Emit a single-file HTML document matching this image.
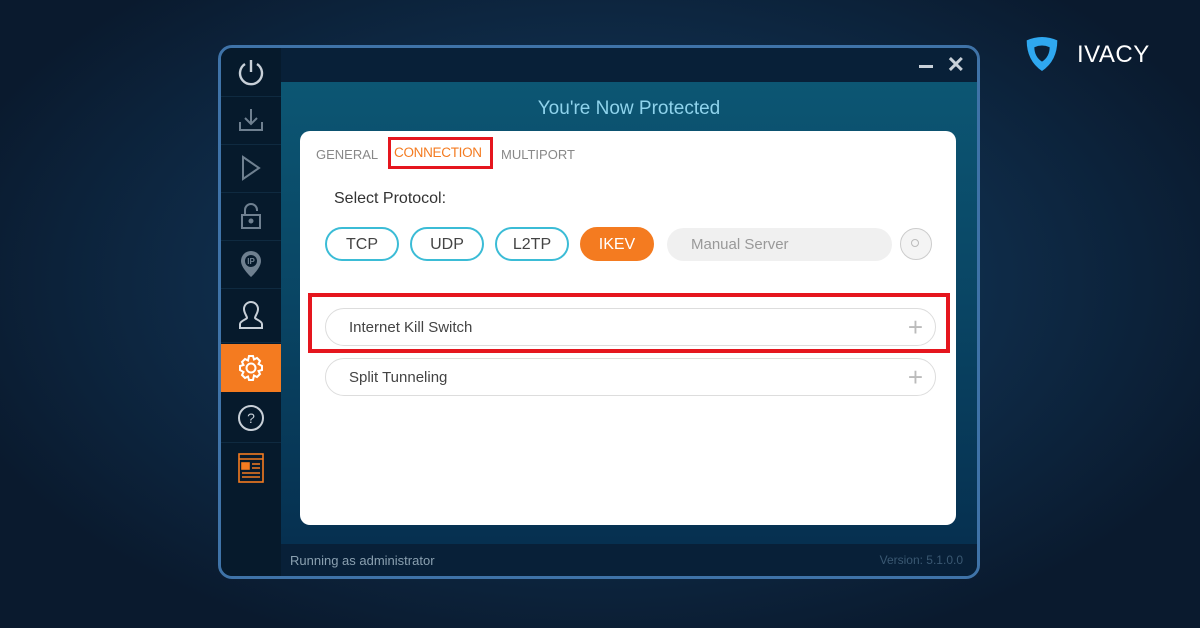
<!DOCTYPE html><html><head><style>
body{margin:0;width:1200px;height:628px;overflow:hidden;background:radial-gradient(ellipse at 50% 45%,#17456a 0%,#0f2e4c 40%,#0a1a2e 80%);font-family:"Liberation Sans",sans-serif;position:relative}
.a{position:absolute}
.win{left:218px;top:45px;width:756px;height:528px;border:3px solid #3f73a8;border-radius:14px;overflow:hidden;background:#072035}
.side{left:0;top:0;width:60px;height:100%;background:#061a2c}
.ic{left:0;width:60px;height:48px;border-bottom:1px solid #0f2a40;display:flex;align-items:center;justify-content:center}
.main{left:60px;top:34px;width:696px;height:462px;background:linear-gradient(180deg,#0c5673 0%,#094463 50%,#063050 100%)}
.top{left:60px;top:0;width:696px;height:34px;background:#082038}
.foot{left:60px;top:496px;width:696px;height:32px;background:#082038;color:#8aa0b0;font-size:13px}
.card{left:300px;top:131px;width:656px;height:394px;background:#fff;border-radius:10px}
.pill{position:absolute;top:227px;height:34px;border:2px solid #3bbcd6;border-radius:18px;box-sizing:border-box;display:flex;align-items:center;justify-content:center;font-size:16px;color:#444;padding-top:2px}
.row{position:absolute;left:325px;width:611px;height:38px;border:1.5px solid #ddd;border-radius:20px;box-sizing:border-box;font-size:15px;color:#444;padding-left:23px;line-height:38px}
.plus{position:absolute;right:12px;top:-1px;color:#bbb;font-size:26px;font-weight:300}
</style></head><body>
<div class="a win">
 <div class="a side">
  <div class="a ic" style="top:0"><svg width="30" height="30" viewBox="0 0 30 30" fill="none" stroke="#c8d0d8" stroke-width="2.4"><path d="M9 7a11 11 0 1 0 12 0"/><path d="M15 3v12"/></svg></div>
  <div class="a ic" style="top:48px"><svg width="28" height="28" viewBox="0 0 28 28" fill="none" stroke="#6f8090" stroke-width="2"><path d="M3 16v8h22v-8M14 3v15M8 12l6 6 6-6"/></svg></div>
  <div class="a ic" style="top:96px"><svg width="24" height="28" viewBox="0 0 24 28" fill="none" stroke="#6f8090" stroke-width="2"><path d="M4 3l16 11-16 11z"/></svg></div>
  <div class="a ic" style="top:144px"><svg width="24" height="30" viewBox="0 0 24 30" fill="none" stroke="#6f8090" stroke-width="2"><path d="M6 14V9a6 6 0 0 1 12 0v1"/><rect x="3" y="14" width="18" height="13"/><circle cx="12" cy="20" r="1.5" fill="#6f8090"/></svg></div>
  <div class="a ic" style="top:192px"><svg width="24" height="30" viewBox="0 0 24 30"><path d="M12 2a10 10 0 0 1 10 10c0 7-10 16-10 16S2 19 2 12A10 10 0 0 1 12 2z" fill="#6f8090"/><circle cx="12" cy="12" r="6" fill="#061a2c"/><text x="12" y="15" font-size="8" fill="#6f8090" text-anchor="middle" font-family="Liberation Sans" font-weight="bold">IP</text></svg></div>
  <div class="a ic" style="top:240px;height:54px"><svg width="26" height="30" viewBox="0 0 26 30" fill="none" stroke="#c8d0d8" stroke-width="2"><path d="M13 2a7 7 0 0 1 7 7c0 4-3 7-3 9 0 1 7 3 7 6v4H2v-4c0-3 7-5 7-6 0-2-3-5-3-9a7 7 0 0 1 7-7z"/></svg></div>
  <div class="a" style="top:296px;left:0;width:60px;height:48px;background:#f47b20;display:flex;align-items:center;justify-content:center"><svg width="30" height="30" viewBox="0 0 30 30" fill="none" stroke="#fff" stroke-width="2"><circle cx="15" cy="15" r="4.5"/><path d="M13 3h4l1 3.5 3-1.5 3 3-1.5 3L26 13v4l-3.5 1 1.5 3-3 3-3-1.5L17 27h-4l-1-3.5-3 1.5-3-3 1.5-3L4 17v-4l3.5-1L6 9l3-3 3 1.5z"/></svg></div>
  <div class="a ic" style="top:346px"><svg width="30" height="30" viewBox="0 0 30 30" fill="none" stroke="#c8d0d8" stroke-width="2"><circle cx="15" cy="15" r="12"/><text x="15" y="20" font-size="14" fill="#c8d0d8" stroke="none" text-anchor="middle" font-family="Liberation Sans">?</text></svg></div>
  <div class="a" style="top:396px;left:0;width:60px;height:48px;display:flex;align-items:center;justify-content:center"><svg width="26" height="30" viewBox="0 0 26 30" fill="none" stroke="#f47b20" stroke-width="1.6"><rect x="1" y="1" width="24" height="28"/><path d="M1 6h24"/><rect x="4" y="10" width="7" height="6" fill="#f47b20"/><path d="M14 11h8M14 15h8M4 20h18M4 24h18"/></svg></div>
 </div>
 <div class="a top"><div class="a" style="right:44px;top:17px;width:14px;height:3px;background:#c8d0d8"></div><div class="a" style="right:12px;top:4px;color:#c8d0d8;font-size:22px;font-weight:bold">✕</div></div>
 <div class="a main"><div class="a" style="left:0;width:696px;top:16px;text-align:center;color:#8fd3ec;font-size:19px">You're Now Protected</div></div>
 <div class="a foot"><span class="a" style="left:9px;top:9px">Running as administrator</span><span class="a" style="right:14px;top:9px;font-size:12px;color:#3a5872">Version: 5.1.0.0</span></div>
</div>
<div class="a card"></div>
<div class="a" style="left:316px;top:147px;font-size:13px;color:#888">GENERAL</div>
<div class="a" style="left:388px;top:137px;width:105px;height:32px;border:3px solid #e5161e;box-sizing:border-box"></div>
<div class="a" style="left:394px;top:145px;font-size:13.5px;color:#f47b20;letter-spacing:-0.3px">CONNECTION</div>
<div class="a" style="left:501px;top:147px;font-size:13px;color:#888">MULTIPORT</div>
<div class="a" style="left:334px;top:190px;font-size:16px;color:#333">Select Protocol:</div>
<div class="pill" style="left:325px;width:74px">TCP</div>
<div class="pill" style="left:410px;width:74px">UDP</div>
<div class="pill" style="left:495px;width:74px">L2TP</div>
<div class="pill" style="left:580px;width:74px;background:#f47b20;border-color:#f47b20;color:#fff">IKEV</div>
<div class="a" style="left:667px;top:228px;width:225px;height:33px;background:#f0f0f0;border-radius:17px;color:#999;font-size:15px;line-height:33px;padding-left:24px;box-sizing:border-box">Manual Server</div>
<div class="a" style="left:900px;top:228px;width:32px;height:32px;border:1.5px solid #ccc;border-radius:50%;box-sizing:border-box;background:#f4f4f4"><div class="a" style="left:10px;top:10px;width:6px;height:6px;border:1.5px solid #bbb;border-radius:50%"></div></div>
<div class="a" style="left:308px;top:293px;width:642px;height:60px;border:4px solid #e5161e;box-sizing:border-box"></div>
<div class="row" style="top:308px">Internet Kill Switch<span class="plus">+</span></div>
<div class="row" style="top:358px">Split Tunneling<span class="plus">+</span></div>
<svg class="a" style="left:1025px;top:33px" width="34" height="42" viewBox="0 0 40 44"><path d="M2 6Q20-2 38 6Q38 30 20 42Q2 30 2 6z" fill="#2fa8f0"/><path d="M11 14Q20 10 29 14Q29 25 20 31Q11 25 11 14z" fill="#0c1f35"/></svg>
<div class="a" style="left:1077px;top:41px;color:#fff;font-size:24px;letter-spacing:0.5px">IVACY</div>
</body></html>
